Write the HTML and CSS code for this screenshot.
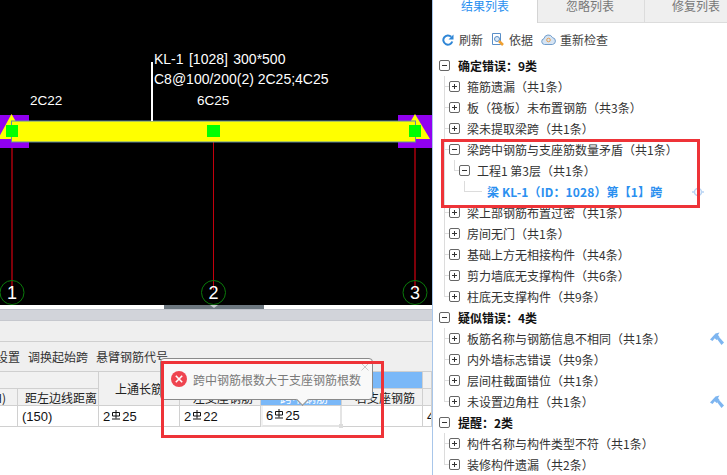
FILE: index.html
```html
<!DOCTYPE html>
<html lang="zh-CN">
  <head>
    <meta charset="utf-8">
    <title>结果列表</title>
    <link rel="stylesheet" href="styles.css">
  </head>
  <body>
    <svg width="0" height="0" class="defs">
      <symbol id="rebar" viewBox="0 0 8 10">
        <path d="M4 0v8.500M.5 2.500h7v3.500h-7zM0 9h8" fill="none" stroke="#111" stroke-width="1"/>
      </symbol>
      <symbol id="plus" viewBox="0 0 11 11">
        <rect x=".5" y=".5" width="10" height="10" rx="1.500" fill="#fff" stroke="#666"/>
        <path d="M3 5.500h5M5.500 3v5" stroke="#333"/>
      </symbol>
      <symbol id="minus" viewBox="0 0 11 11">
        <rect x=".5" y=".5" width="10" height="10" rx="1.500" fill="#fff" stroke="#666"/>
        <path d="M3 5.500h5" stroke="#333"/>
      </symbol>
      <symbol id="hammer" viewBox="0 0 14 14">
        <path d="M0 7.500 5.500 1.500 9.500 .5 8 3 9.500 5 6.500 8 4.800 6.300 2.500 9z" fill="#7db5f0"/>
        <path d="M7 7 9 5l5 5.500-2.500 2.500z" fill="#7db5f0"/>
      </symbol>
    </svg>

    <div class="left">
      <svg class="canvas" width="432" height="305" viewBox="0 0 432 305">
        <rect width="432" height="305" fill="#000"/>
        <path d="M12 148V290M415 148V290" stroke="#a8000c" stroke-width="1.500"/>
        <path d="M213.500 142V290" stroke="#c4000c"/>
        <rect x="0" y="115" width="29" height="33" fill="#9100f0"/>
        <rect x="398" y="115" width="34" height="33" fill="#9100f0"/>
        <path d="M11.500 114 26 139H-2z" fill="#ffff00"/>
        <path d="M415 114 430 139H400z" fill="#ffff00"/>
        <rect x="11.500" y="121" width="404" height="21" fill="#ffff00" stroke="#5f8aa8"/>
        <rect x="6" y="125" width="12" height="12" fill="#00ff00"/>
        <rect x="207" y="125" width="13" height="12" fill="#00ff00"/>
        <rect x="409" y="125" width="12" height="12" fill="#00ff00"/>
        <path d="M152 62V121" stroke="#fff" stroke-width="2"/>
        <g class="labels">
          <text class="title" x="154" y="64">KL-1 [1028] 300*500</text>
          <text x="154" y="84">C8@100/200(2) 2C25;4C25</text>
          <text class="small" x="30" y="105">2C22</text>
          <text class="small" x="197" y="105">6C25</text>
        </g>
        <g fill="none" stroke="#0a7a0a">
          <circle cx="12" cy="292.500" r="12"/>
          <circle cx="213.500" cy="292.500" r="12"/>
          <circle cx="415" cy="292.500" r="12"/>
        </g>
        <g class="axis">
          <text x="12" y="299">1</text>
          <text x="213.500" y="299">2</text>
          <text x="415" y="299">3</text>
        </g>
      </svg>

      <div class="splitter"><span class="handle"></span></div>
      <div class="band"></div>
      <div class="strip"></div>
      <div class="tools">
        <span>设置</span>
        <span>调换起始跨</span>
        <span>悬臂钢筋代号</span>
      </div>

      <div class="grid">
        <div class="cell span-2"></div>
        <div class="cell tall">上通长筋</div>
        <div class="cell blue span-3"></div>
        <div class="cell"></div>

        <div class="cell clipped"><span>H)</span></div>
        <div class="cell h2">距左边线距离</div>
        <div class="cell h2">左支座钢筋</div>
        <div class="cell h2 blue">跨中钢筋</div>
        <div class="cell h2">右支座钢筋</div>
        <div class="cell"></div>

        <div class="cell data"></div>
        <div class="cell data">(150)</div>
        <div class="cell data">2<svg class="rebar"><use href="#rebar"/></svg>25</div>
        <div class="cell data">2<svg class="rebar"><use href="#rebar"/></svg>22</div>
        <div class="cell data picked">6<svg class="rebar"><use href="#rebar"/></svg>25<i class="grip"></i></div>
        <div class="cell data"></div>
        <div class="cell data">4</div>
      </div>

      <div class="popup">
        <svg class="popup-icon" width="16" height="16" viewBox="0 0 16 16">
          <circle cx="8" cy="8" r="8" fill="#ef4550"/>
          <path d="m4.800 4.800 6.400 6.400m0-6.400-6.400 6.400" stroke="#fff" stroke-width="1.600"/>
        </svg>
        <span>跨中钢筋根数大于支座钢筋根数</span>
        <svg class="popup-close" width="8" height="8" viewBox="0 0 8 8">
          <path d="m.5.5 7 7m0-7-7 7" stroke="#c8c8c8"/>
        </svg>
      </div>
    </div>

    <div class="panel">
      <div class="tabs">
        <div class="tab active">结果列表</div>
        <div class="tab t2">忽略列表</div>
        <div class="tab t3">修复列表</div>
      </div>
      <div class="actions">
        <svg width="12" height="12" viewBox="0 0 12 12">
          <path d="M10.300 7.500A4.600 4.600 0 1 1 9.200 2.800" fill="none" stroke="#2f86d6" stroke-width="2"/>
          <path d="M11.500 .5v5h-5z" fill="#2f86d6"/>
        </svg>
        <span class="a1">刷新</span>
        <svg width="12" height="14" viewBox="0 0 12 14">
          <path d="M.5.5h8v11h-8z" fill="#fff" stroke="#5a8fc8"/>
          <circle cx="5" cy="6" r="2.500" fill="#dce9f6" stroke="#5a8fc8"/>
          <path d="m7 8 4 4" stroke="#f0a030" stroke-width="2.500"/>
        </svg>
        <span class="a2">依据</span>
        <svg width="15" height="11" viewBox="0 0 15 11">
          <path d="M3.500 10.500a3 3 0 0 1-.5-5.900 4.500 4.500 0 0 1 8.500-1 3.500 3.500 0 0 1 0 6.900z" fill="#d6e4f3" stroke="#6f9ccb"/>
          <circle cx="7.500" cy="6" r="1.800" fill="none" stroke="#e8a050"/>
        </svg>
        <span class="a3">重新检查</span>
      </div>

      <ul class="tree">
        <li>
          <div class="row head"><svg class="box"><use href="#minus"/></svg>确定错误：9类</div>
          <ul class="kids">
            <li><div class="row"><i class="stub"></i><svg class="box"><use href="#plus"/></svg>箍筋遗漏（共1条）</div></li>
            <li><div class="row"><i class="stub"></i><svg class="box"><use href="#plus"/></svg>板（筏板）未布置钢筋（共3条）</div></li>
            <li><div class="row"><i class="stub"></i><svg class="box"><use href="#plus"/></svg>梁未提取梁跨（共1条）</div></li>
            <li>
              <div class="row"><i class="stub"></i><svg class="box"><use href="#minus"/></svg>梁跨中钢筋与支座筋数量矛盾（共1条）</div>
              <ul class="kids sub">
                <li>
                  <div class="row"><i class="stub"></i><svg class="box"><use href="#minus"/></svg>工程1 第3层（共1条）</div>
                  <ul class="kids sub">
                    <li>
                      <div class="row leaf"><i class="stub long"></i>梁 KL-1（ID：1028）第【1】跨
                        <svg class="locate" width="12" height="12" viewBox="0 0 12 12">
                          <circle cx="6" cy="6" r="3.500" fill="none" stroke="#b8d4f4" stroke-width="1.500"/>
                          <path d="M0 6h2.500M9.500 6H12M6 0v2.500M6 9.500V12" stroke="#b8d4f4" stroke-width="1.500"/>
                        </svg>
                      </div>
                    </li>
                  </ul>
                </li>
              </ul>
            </li>
            <li><div class="row"><i class="stub"></i><svg class="box"><use href="#plus"/></svg>梁上部钢筋布置过密（共1条）</div></li>
            <li><div class="row"><i class="stub"></i><svg class="box"><use href="#plus"/></svg>房间无门（共1条）</div></li>
            <li><div class="row"><i class="stub"></i><svg class="box"><use href="#plus"/></svg>基础上方无相接构件（共4条）</div></li>
            <li><div class="row"><i class="stub"></i><svg class="box"><use href="#plus"/></svg>剪力墙底无支撑构件（共6条）</div></li>
            <li><div class="row"><i class="stub"></i><svg class="box"><use href="#plus"/></svg>柱底无支撑构件（共9条）</div></li>
          </ul>
        </li>
        <li>
          <div class="row head"><svg class="box"><use href="#minus"/></svg>疑似错误：4类</div>
          <ul class="kids">
            <li><div class="row"><i class="stub"></i><svg class="box"><use href="#plus"/></svg>板筋名称与钢筋信息不相同（共1条）<svg class="fix"><use href="#hammer"/></svg></div></li>
            <li><div class="row"><i class="stub"></i><svg class="box"><use href="#plus"/></svg>内外墙标志错误（共9条）</div></li>
            <li><div class="row"><i class="stub"></i><svg class="box"><use href="#plus"/></svg>层间柱截面错位（共1条）</div></li>
            <li><div class="row"><i class="stub"></i><svg class="box"><use href="#plus"/></svg>未设置边角柱（共1条）<svg class="fix"><use href="#hammer"/></svg></div></li>
          </ul>
        </li>
        <li>
          <div class="row head"><svg class="box"><use href="#minus"/></svg>提醒：2类</div>
          <ul class="kids">
            <li><div class="row"><i class="stub"></i><svg class="box"><use href="#plus"/></svg>构件名称与构件类型不符（共1条）</div></li>
            <li><div class="row"><i class="stub"></i><svg class="box"><use href="#plus"/></svg>装修构件遗漏（共2条）</div></li>
          </ul>
        </li>
      </ul>
    </div>

    <div class="mark mark-table"></div>
    <div class="mark mark-tree"></div>
  </body>
</html>
```

FILE: styles.css
```css
*{
    margin: 0;
    padding: 0;
    box-sizing: border-box;
}
html,body{
    height: 475px;
    overflow: hidden;
}
body{
    display: flex;
    position: relative;
    background: #fff;
    font-family: "Noto Sans CJK SC", "Liberation Sans", sans-serif;
    font-size: 12px;
    color: #333;
}
.defs{
    display: block;
    position: absolute;
}
ul{
    list-style: none;
}

/* left side: drawing and table */
.left{
    width: 432px;
    flex: none;
    position: relative;
    overflow: hidden;
}
.canvas{
    display: block;
}
.labels text{
    fill: #fff;
    font-family: "Liberation Sans", sans-serif;
    font-size: 14px;
}
.labels .title{
    word-spacing: 1.500px;
}
.labels .small{
    font-size: 13.500px;
}
.axis text{
    fill: #fff;
    font-family: "Liberation Sans", sans-serif;
    font-size: 18px;
    text-anchor: middle;
}
.splitter{
    height: 5px;
    background: #fff;
    border-bottom: 1px solid #c0c4cc;
    display: flex;
    justify-content: center;
    padding-right: 4px;
}
.handle{
    width: 100px;
    height: 4px;
    background: #6d7880;
    display: flex;
    justify-content: center;
}
.handle::after{
    content: "";
    width: 0;
    height: 0;
    border-top: 3px solid #c8ccd0;
    border-left: 4px solid transparent;
    border-right: 4px solid transparent;
}
.band{
    height: 11px;
    background: #d2d4da;
    border-bottom: 1px solid #c6c8ce;
}
.strip{
    height: 21px;
    background: #efefef;
    border-bottom: 1px solid #cfcfcf;
}
.tools{
    height: 30px;
    background: #efefef;
    border-bottom: 1px solid #cfcfcf;
    display: flex;
    align-items: center;
    gap: 8px;
    margin-left: -4px;
    padding-bottom: 1px;
}

.grid{
    display: grid;
    grid-template-columns: 18px repeat(5, 81px) 1fr;
    grid-template-rows: 17px 17px 21px;
    color: #222;
}
.cell{
    background: #f1f1f1;
    border-right: 1px solid #d0d0d0;
    border-bottom: 1px solid #d0d0d0;
    display: flex;
    align-items: center;
    justify-content: center;
    white-space: nowrap;
    overflow: hidden;
}
.span-2{
    grid-column: span 2;
}
.span-3{
    grid-column: span 3;
}
.tall{
    grid-row: span 2;
}
.h2{
    padding-left: 6px;
}
.clipped{
    justify-content: flex-end;
    padding-right: 11px;
}
.clipped span{
    flex: none;
}
.blue{
    background: #7ab8f8;
    color: #fff;
}
.data{
    background: #fff;
    justify-content: flex-start;
    padding-left: 4px;
    font-family: "Liberation Sans", sans-serif;
    font-size: 13px;
    color: #111;
}
.rebar{
    width: 8px;
    height: 10px;
    margin: 0 2px 3px 2px;
}
.picked{
    border: 2px solid #e4e4e4;
    border-top: 0;
    border-left: 2px solid #f2f2f2;
    padding-left: 3px;
    overflow: visible;
    position: relative;
}
.grip{
    position: absolute;
    right: -3px;
    bottom: -3px;
    width: 4px;
    height: 4px;
    background: #dcdcdc;
}

.popup{
    position: absolute;
    left: 160px;
    top: 358px;
    width: 213px;
    height: 42px;
    background: #f9f9f9;
    border: 1px solid #8a8a8a;
    border-radius: 4px;
    display: flex;
    align-items: center;
    padding-left: 10px;
    gap: 6px;
    color: #7a7a7a;
}
.popup::after{
    content: "";
    position: absolute;
    left: 137px;
    bottom: -5px;
    width: 8px;
    height: 8px;
    background: #f9f9f9;
    border-right: 1px solid #8a8a8a;
    border-bottom: 1px solid #8a8a8a;
    transform: rotate(45deg);
}
.popup-icon{
    flex: none;
}
.popup-close{
    position: absolute;
    right: 3px;
    top: 4px;
}

/* right side: result panel */
.panel{
    flex: 1;
    border-left: 1px solid #a8c6ea;
    min-width: 0;
}
.tabs{
    display: flex;
    height: 23px;
}
.tab{
    line-height: 11px;
    text-align: center;
    font-size: 12px;
    color: #777;
    background: #efefef;
    border-bottom: 1px solid #dcdcdc;
    overflow: hidden;
}
.tab.active{
    width: 105px;
    color: #2a8ff0;
    background: #fff;
    border-bottom: 0;
    border-right: 1px solid #d4d4d4;
}
.tab.t2{
    width: 107px;
    padding-right: 2px;
    border-right: 1px solid #dcdcdc;
}
.tab.t3{
    flex: 1;
    text-align: left;
    padding-left: 27px;
}
.actions{
    height: 32px;
    display: flex;
    align-items: center;
    padding: 1px 0 0 9px;
    color: #444;
}
.a1{
    margin: 0 9px 0 5px;
}
.a2{
    margin: 0 8px 0 5px;
}
.a3{
    margin-left: 4px;
}

.tree{
    color: #333;
}
.row{
    height: 21px;
    display: flex;
    align-items: center;
    white-space: nowrap;
}
.head{
    padding-left: 6px;
    font-weight: 700;
    color: #111;
}
.box{
    width: 11px;
    height: 11px;
    flex: none;
    margin-right: 7px;
}
.head .box{
    margin-right: 8px;
}
.kids{
    margin-left: 11px;
}
.kids.sub{
    margin-left: 10px;
}
.kids > li{
    background: linear-gradient(#dcdcdc, #dcdcdc) no-repeat 0 0 / 1px 100%;
}
.kids > li:last-child{
    background-size: 1px 11px;
}
.stub{
    width: 5px;
    height: 1px;
    background: #dcdcdc;
    flex: none;
}
.stub.long{
    width: 18px;
    margin-right: 5px;
}
.leaf{
    color: #2a8ff0;
    font-weight: 700;
    letter-spacing: .13px;
}
.locate{
    margin-left: auto;
    margin-right: 23px;
}
.fix{
    width: 14px;
    height: 14px;
    margin-left: auto;
    margin-right: 3px;
}

/* red hand drawn marks on top of the screenshot */
.mark{
    position: absolute;
    border: 3px solid #ee3338;
    pointer-events: none;
}
.mark-table{
    left: 161px;
    top: 361px;
    width: 223px;
    height: 77px;
}
.mark-tree{
    left: 441px;
    top: 139px;
    width: 259px;
    height: 69px;
}
```
